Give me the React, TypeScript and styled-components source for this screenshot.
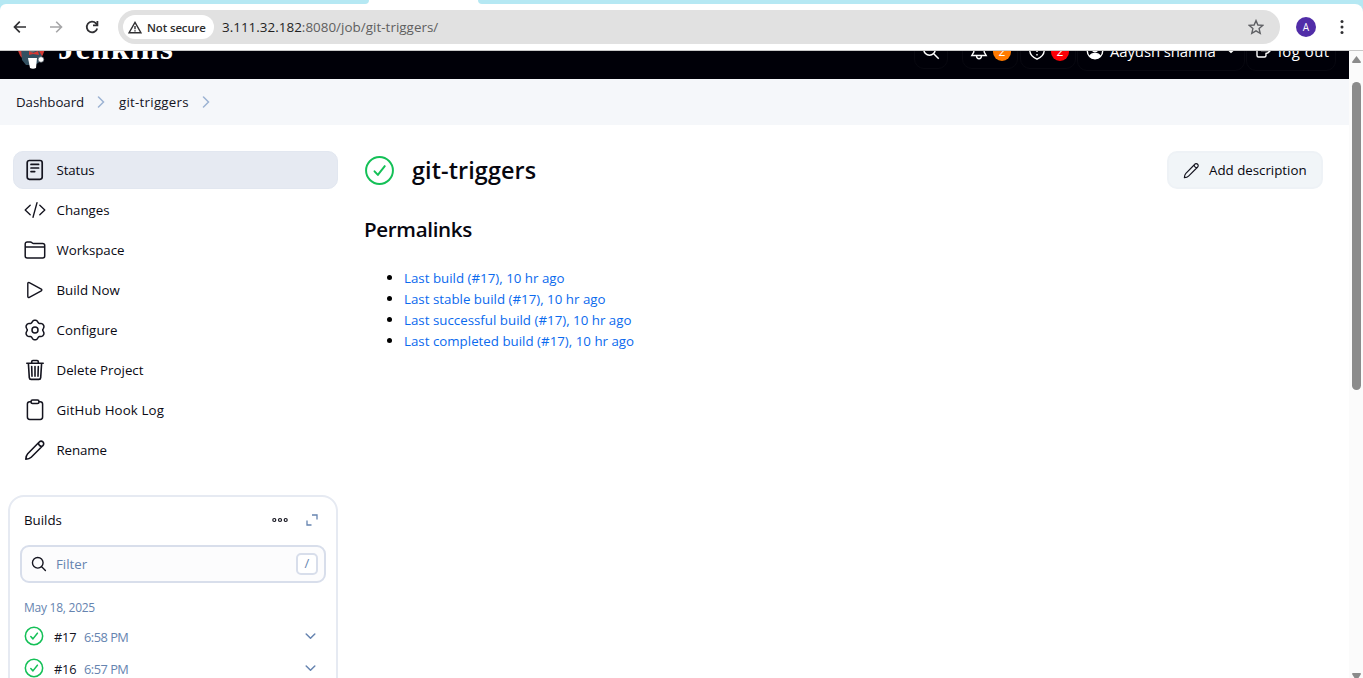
import React from 'react';
import styled, { createGlobalStyle } from 'styled-components';

const GlobalStyle = createGlobalStyle`
  * { box-sizing: border-box; }
  body { margin: 0; background: #fff; overflow: hidden; font-family: "Open Sans", "Noto Sans", sans-serif; font-size: 13.3px; color: #14141f; }
  svg { display: block; flex: none; }
`;

const Label = styled.span<{ $ls?: number }>`
  white-space: nowrap;
  letter-spacing: ${p => p.$ls ?? 0}px;
`;

/* Browser chrome */
const Window = styled.div`
  width: 1363px; height: 678px; display: flex; flex-direction: column; overflow: hidden; background: #fff;
`;
const TabStrip = styled.div`
  height: 4px; flex: none; display: flex; justify-content: space-between; background: #fff;
`;
const StripPart = styled.div<{ $w: number; $left?: boolean }>`
  width: ${p => p.$w}px; background: #b5e8f3;
  border-radius: ${p => (p.$left ? '0 0 8px 0' : '0 0 0 8px')};
`;
const ToolbarBack = styled.div`
  height: 47px; flex: none; background: #b5e8f3;
`;
const Toolbar = styled.div`
  height: 47px; display: flex; align-items: center; background: #fff; border-bottom: 1px solid #c8c8c8;
  border-radius: 6px 8px 0 0; padding: 0 13px 0 12px;
`;
const NavButtons = styled.div`
  display: flex; gap: 20px; width: 106px; flex: none;
`;
const AddressBar = styled.div`
  width: 1162px; height: 34px; border-radius: 17px; background: #e1e1e1; display: flex; align-items: center;
  padding: 0 16px 0 5px;
`;
const SecurityChip = styled.div`
  width: 91px; height: 24px; border-radius: 12px; background: #fff; display: flex; align-items: center; gap: 5px;
  padding-left: 5px; font-size: 11.4px; font-weight: 600; color: #2c2c2c; letter-spacing: -0.1px;
`;
const ChipText = styled.span` white-space: nowrap; `;
const Url = styled.div`
  flex: 1; margin-left: 8px; font-size: 13.4px; color: #5f5f5f; white-space: nowrap; letter-spacing: 0.03px;
`;
const Host = styled.span` color: #1f1f1f; `;
const Avatar = styled.div`
  width: 20px; height: 20px; margin: 0 auto 0 16px; border-radius: 50%; background: #512da8; color: #fff;
  font-size: 10px; display: flex; align-items: center; justify-content: center;
`;

/* Page */
const Viewport = styled.div` flex: 1; min-height: 0; display: flex; `;
const Page = styled.div` width: 1349px; flex: none; overflow: hidden; `;
const ScrollTrack = styled.div`
  width: 14px; background: #fbfbfb; display: flex; flex-direction: column; align-items: center; padding: 5px 0 0 1px;
`;
const ScrollThumb = styled.div`
  width: 9px; height: 308px; margin: 19px 0 auto; border-radius: 5px; background: #8b8b8b;
`;
const HeaderClip = styled.div`
  height: 28px; overflow: hidden; display: flex; align-items: flex-end; background: #000008;
`;
const Header = styled.header`
  height: 56px; flex: 1; display: flex; align-items: center; color: #fff; padding: 0 13px 0 17px;
`;
const Brand = styled.div`
  font-family: "Liberation Serif", serif; font-weight: 700; font-size: 33px; line-height: 36px;
  margin: 0 auto 6px 12px; letter-spacing: 1.1px;
`;
const HeaderButton = styled.div<{ $w: number; $h: number; $gap?: number; $pad?: number; $ml?: number }>`
  width: ${p => p.$w}px; height: ${p => p.$h}px; margin-left: ${p => p.$ml ?? 0}px;
  padding-left: ${p => p.$pad ?? 8}px; gap: ${p => p.$gap ?? 6}px;
  border: 1px solid #080810; border-radius: 10px; display: flex; align-items: center; font-size: 14.9px;
`;
const Badge = styled.span<{ $c: string }>`
  width: 18px; height: 18px; margin: 1px 0 0 -1px; border-radius: 9px; background: ${p => p.$c}; font-size: 12px; line-height: 17px; text-align: center;
`;
const Breadcrumbs = styled.nav`
  height: 46px; background: #f5f7fa; display: flex; align-items: center; padding-left: 16px;
`;
const Crumb = styled(Label)<{ $w: number }>` width: ${p => p.$w}px; `;
const Divider = styled.svg` margin: 0 14px 0 13px; `;
const Body = styled.div` display: flex; `;
const Side = styled.aside` width: 338px; flex: none; padding: 26px 0 0 8px; `;
const Task = styled.div<{ $active?: boolean }>`
  height: 38px; margin: 0 0 2px 5px; padding-left: 10px; display: flex; align-items: center; gap: 10.5px;
  border-radius: 10px; background: ${p => (p.$active ? '#e6eaf2' : 'transparent')};
  border: 1px solid ${p => (p.$active ? '#e2e7f0' : 'transparent')};
  color: #0a0a14;
`;
const BuildsCard = styled.section`
  margin-top: 26px; width: 330px; height: 260px; border: 2px solid #e6eaf2; border-radius: 16px; padding: 0 10px;
`;
const BuildsHeader = styled.div`
  height: 48px; display: flex; align-items: center; padding: 0 8px 2px 4px; gap: 18px; color: #0a0a14;
`;
const BuildsTitle = styled(Label)` margin-right: auto; `;
const Filter = styled.div`
  height: 38px; border: 2px solid #d8deeb; border-radius: 9px; background: #fcfcfd; display: flex; align-items: center;
  padding: 0 6px 0 9px; gap: 9px; color: #6684b0;
`;
const Key = styled.div`
  width: 22px; height: 22px; border: 2px solid #d8deeb; border-radius: 5px; margin-left: auto; background: #fff;
  text-align: center; font-size: 13px; line-height: 17px;
`;
const DateLabel = styled.div`
  margin: 15px 4px 4px; font-size: 12px; line-height: 20px; height: 18px; color: #6684b0; letter-spacing: -0.25px;
`;
const Build = styled.div`
  height: 32px; display: flex; align-items: center; padding: 0 10px 0 4px;
`;
const BuildNumber = styled(Label)` width: 30px; margin-left: 10px; font-size: 12.8px; padding-top: 2px; `;
const BuildTime = styled(Label)` flex: 1; font-size: 12.8px; color: #6684b0; padding-top: 2px; `;

const Main = styled.main` flex: 1; padding: 26px 26px 0 26px; color: #07070f; `;
const TitleRow = styled.div` display: flex; align-items: center; height: 38px; `;
const Title = styled.h1`
  margin: 0 auto 0 17px; font-size: 23.4px; font-weight: 600; letter-spacing: 0.1px; line-height: 38px; white-space: nowrap;
`;
const DescriptionButton = styled.div`
  width: 156px; height: 38px; border-radius: 10px; background: #f1f5f8; border: 2px solid #eef2f6; display: flex;
  align-items: center; gap: 9px; padding-left: 14px;
`;
const Heading = styled.h2` margin: 23px 0 21px; font-size: 20.6px; font-weight: 600; line-height: 34px; letter-spacing: -0.35px; `;
const Links = styled.ul` margin: 0; padding: 0; list-style: none; `;
const LinkRow = styled.li`
  display: flex; align-items: center; height: 21px; padding-left: 23px; color: #0b6aee;
  &::before { content: ''; width: 5px; height: 5px; border-radius: 50%; background: #000; margin-right: 12px; }
`;

const Icon = ({ size = 22, w = 1.5, children, color = '#14141f' }: { size?: number; w?: number; color?: string; children: React.ReactNode }) => (
  <svg width={size} height={size} viewBox="0 0 22 22" fill="none" stroke={color} strokeWidth={w} strokeLinecap="round" strokeLinejoin="round">{children}</svg>
);
const Pencil = ({ size = 22, w = 1.4 }: { size?: number; w?: number }) => (
  <Icon size={size} w={w}><path d="M1.800 20.200c.1-2 .5-4 1.900-5.500L15 3.200c1.100-1.300 2.700-1.500 3.900-.3s1 2.800-.2 3.900L7.200 18.200c-1.500 1.500-3.400 1.900-5.400 2zM14.600 3.800c-.4 1.900 1.600 3.900 3.500 3.500" /></Icon>
);
const Down = ({ color = '#6684b0', size = 11 }: { color?: string; size?: number }) => (
  <svg width={size} height="7" viewBox="0 0 11 7" fill="none" stroke={color} strokeWidth="1.5"><path d="M1.2 1l4.3 4.2L9.8 1" strokeLinecap="round" strokeLinejoin="round" /></svg>
);
const Success = ({ size, w }: { size: number; w: number }) => (
  <svg width={size} height={size} viewBox="0 0 30 30" fill="none" stroke="#14c057" strokeWidth={w} strokeLinecap="round" strokeLinejoin="round">
    <circle cx="15" cy="15" r="13" /><path d="M10.200 15.800l3.200 3.500 6.700-8.500" />
  </svg>
);
const Chevron = () => (
  <Divider width="8" height="12" viewBox="0 0 8 12" fill="none" stroke="#9db3d3" strokeWidth="1.5"><path d="M1.5 1l5 5-5 5" strokeLinecap="round" /></Divider>
);

/* Six-lobed gear outline */
const gear = Array.from({ length: 72 }, (_, i) => {
  const a = (i * Math.PI) / 36;
  const r = 8.9 - 1.05 * Math.cos(6 * a) - 0.15 * Math.cos(12 * a);
  return `${(11 + r * Math.cos(a)).toFixed(2)},${(11 + r * Math.sin(a)).toFixed(2)}`;
}).join(' ');

const tasks: { name: string; ls: number; icon: React.ReactNode }[] = [
  { name: 'Status', ls: -0.1, icon: <Icon w={1.7}><rect x="3.2" y="1.500" width="15" height="18.800" rx="2.200" /><path d="M7 5.400h7.600M7 9h7.600M7 12.600h3.700" /></Icon> },
  { name: 'Changes', ls: 0, icon: <Icon w={1.35}><path d="M6.2 6.2L1.2 11l5 4.8M15.8 6.2l5 4.800-5 4.800M13 3.700L9 18.300" /></Icon> },
  { name: 'Workspace', ls: -0.05, icon: <Icon><path d="M1.200 17V5c0-1.300.8-2 2-2h3.200c1.500 0 1.700 1.500 3.200 1.500h9c1.400 0 2.100.7 2.100 2V17c0 1.200-.8 2-2 2H3.200c-1.300 0-2-.8-2-2zM1.200 8h19.500" /></Icon> },
  { name: 'Build Now', ls: 0, icon: <Icon w={1.4}><path d="M3.800 4.400v13.200c0 .8.8 1.200 1.500.8l12-6.600c.7-.4.7-1.200 0-1.600L5.300 3.600c-.7-.4-1.500 0-1.500.8z" /></Icon> },
  { name: 'Configure', ls: 0.05, icon: <Icon><circle cx="11" cy="11" r="3" /><polygon points={gear} /></Icon> },
  { name: 'Delete Project', ls: 0, icon: <Icon w={1.6}><path d="M4.400 4.500l.9 14.100c.1 1.100.7 1.800 1.800 1.800h7.800c1.100 0 1.700-.7 1.800-1.800l.9-14.100M2.800 4.300h16.400M7.700 4.200V2.700c0-.7.5-1.200 1.200-1.200h4.200c.7 0 1.200.5 1.200 1.200v1.500M11 7.500v9.700M7.700 7.500l.3 9.700M14.300 7.500l-.3 9.700" /></Icon> },
  { name: 'GitHub Hook Log', ls: 0.12, icon: <Icon><path d="M7 2.700H5.800c-1.400 0-2.400 1-2.400 2.400v13c0 1.400 1 2.400 2.400 2.400h10.400c1.400 0 2.400-1 2.400-2.400v-13c0-1.400-1-2.400-2.400-2.400H15" /><rect x="7" y="1" width="8" height="3.400" rx="1.500" /></Icon> },
  { name: 'Rename', ls: -0.1, icon: <Pencil w={1.6} /> },
];

const links: string[] = [
  'Last build (#17), 10 hr ago',
  'Last stable build (#17), 10 hr ago',
  'Last successful build (#17), 10 hr ago',
  'Last completed build (#17), 10 hr ago',
];

const Butler = () => (
  <svg width="29" height="38" viewBox="0 0 29 38">
    <circle cx="14" cy="12" r="12" fill="#f0d6b7" />
    <path d="M0 13q1 10 6 14h17q5-5 5-14z" fill="#d33833" />
    <path d="M4 16l7 3h11l3 5-1 5-6 4H9l-4-5z" fill="#335061" />
    <path d="M10 16h10v2l-5 3-5-3z" fill="#6b6a70" />
    <path d="M12 19l4 2 5-2 1 4-6-1-4 1z" fill="#d33833" />
    <path d="M11 26h9l-1 10q-3 1.500-6 0z" fill="#fff" />
    <circle cx="24" cy="27.500" r="2.800" fill="#fff" stroke="#56606a" strokeWidth=".7" />
  </svg>
);

export default function App() {
  return (
    <Window>
      <GlobalStyle />
      <TabStrip><StripPart $w={369} $left /><StripPart $w={885} /></TabStrip>
      <ToolbarBack>
        <Toolbar>
          <NavButtons>
            <svg width="16" height="16" viewBox="0 0 16 16" fill="none" stroke="#303033" strokeWidth="1.7"><path d="M14 8H2.500M7.800 2.700L2.500 8l5.300 5.300" /></svg>
            <svg width="16" height="16" viewBox="0 0 16 16" fill="none" stroke="#a5a5a7" strokeWidth="1.6"><path d="M2 8h11.500M8.200 2.700L13.500 8l-5.300 5.300" /></svg>
            <svg width="16" height="16" viewBox="0 0 16 16" fill="none" stroke="#303033" strokeWidth="1.8"><path d="M13.200 9.400A5.300 5.300 0 1 1 12 4.400l1.300 1.400" /><path d="M13.400 1.900v4.400H9" /></svg>
          </NavButtons>
          <AddressBar>
            <SecurityChip>
              <svg width="14" height="13" viewBox="0 0 14 13" fill="none" stroke="#303033" strokeWidth="1.4"><path d="M7 1.400L12.900 11.700H1.100z" /><path d="M7 5v3.300M7 9.200v1.300" /></svg>
              <ChipText>Not secure</ChipText>
            </SecurityChip>
            <Url><Host>3.111.32.182</Host>:8080/job/git-triggers/</Url>
            <svg width="16" height="16" viewBox="0 0 16 16" fill="none" stroke="#5f6064" strokeWidth="1.4"><path d="M8 1.600l1.900 4.400 4.800.4-3.600 3.200 1.100 4.700L8 11.800l-4.200 2.500 1.100-4.700L1.300 6.400l4.800-.4z" /></svg>
          </AddressBar>
          <Avatar>A</Avatar>
          <svg width="16" height="16" viewBox="0 0 16 16" fill="#303033"><circle cx="8" cy="2.600" r="1.500" /><circle cx="8" cy="8" r="1.500" /><circle cx="8" cy="13.400" r="1.500" /></svg>
        </Toolbar>
      </ToolbarBack>
      <Viewport>
        <Page>
          <HeaderClip>
            <Header>
              <Butler />
              <Brand>Jenkins</Brand>
              <HeaderButton $w={34} $h={36} $pad={7}><svg width="18" height="18" viewBox="0 0 18 18" fill="none" stroke="#fff" strokeWidth="1.500"><circle cx="7.500" cy="7.500" r="5.700" /><path d="M11.700 11.700l5 5" /></svg></HeaderButton>
              <HeaderButton $w={56} $h={36} $ml={14} $pad={7}>
                <svg width="18" height="18" viewBox="0 0 18 18" fill="none" stroke="#fff" strokeWidth="1.400"><path d="M3.800 10V7a5.200 5.200 0 0 1 10.400 0v3l2 3.500H1.800zM6.500 14c.3 3.600 4.700 3.600 5 0" /></svg>
                <Badge $c="#ff7a00">2</Badge>
              </HeaderButton>
              <HeaderButton $w={56} $h={36} $ml={2} $pad={7}>
                <svg width="18" height="18" viewBox="0 0 18 18" fill="none" stroke="#fff" strokeWidth="1.400"><path d="M9 1L1.800 3.500v5c0 4 3.200 6.800 7.200 8.700 4-1.900 7.200-4.700 7.200-8.700v-5zM9 5v5M9 12v1.500" /></svg>
                <Badge $c="#fc0006">2</Badge>
              </HeaderButton>
              <HeaderButton $w={168} $h={40} $ml={1}>
                <svg width="18" height="18" viewBox="0 0 18 18" fill="none" stroke="#fff" strokeWidth="1.400"><circle cx="9" cy="9" r="7.700" /><circle cx="9" cy="7" r="2.700" fill="#fff" /><path d="M4 14c1.500-3.500 8.500-3.500 10 0-2.500 3-7.500 3-10 0z" fill="#fff" /></svg>
                <Label $ls={-0.1}>Aayush sharma</Label>
                <svg width="16" height="7" viewBox="0 0 16 7" fill="none" stroke="#fff" strokeWidth="1.500"><path d="M5.500 1L9 4.300 12.500 1" /></svg>
              </HeaderButton>
              <HeaderButton $w={90} $h={40} $ml={1} $gap={5}>
                <svg width="18" height="18" viewBox="0 0 18 18" fill="none" stroke="#fff" strokeWidth="1.400"><path d="M7 3H3.500C2.500 3 2 3.500 2 4.500v9c0 1 .5 1.500 1.500 1.500h6c1 0 1.500-.5 1.500-1.500V11.500q2-.2 4-2.500M6 8.500h10M12.500 4.500l4 4" /></svg>
                <Label $ls={0.5}>log out</Label>
              </HeaderButton>
            </Header>
          </HeaderClip>
          <Breadcrumbs>
            <Crumb $w={68} $ls={-0.05}>Dashboard</Crumb><Chevron /><Crumb $w={70} $ls={0.25}>git-triggers</Crumb><Chevron />
          </Breadcrumbs>
          <Body>
            <Side>
              {tasks.map((t, i) => <Task key={t.name} $active={i === 0}>{t.icon}<Label $ls={t.ls}>{t.name}</Label></Task>)}
              <BuildsCard>
                <BuildsHeader>
                  <BuildsTitle>Builds</BuildsTitle>
                  <svg width="16" height="6" viewBox="0 0 16 6" fill="none" stroke="#14141f" strokeWidth="1.200"><circle cx="2.300" cy="3" r="1.500" /><circle cx="8" cy="3" r="1.500" /><circle cx="13.700" cy="3" r="1.500" /></svg>
                  <svg width="12" height="12" viewBox="0 0 12 12" fill="none" stroke="#6684b0" strokeWidth="1.300"><path d="M6 1h5v4.500M1 6.500v4.500h4.500" /></svg>
                </BuildsHeader>
                <Filter>
                  <Icon size={16} w={1.900}><circle cx="9.300" cy="9.300" r="7.300" /><path d="M15 15l4.800 4.800" /></Icon>
                  <Label>Filter</Label><Key>/</Key>
                </Filter>
                <DateLabel>May 18, 2025</DateLabel>
                {[['#17', '6:58 PM'], ['#16', '6:57 PM']].map(([n, t]) => (
                  <Build key={n}><Success size={20} w={2.300} /><BuildNumber $ls={-0.2}>{n}</BuildNumber><BuildTime $ls={-0.5}>{t}</BuildTime><Down /></Build>
                ))}
              </BuildsCard>
            </Side>
            <Main>
              <TitleRow>
                <Success size={31} w={1.900} />
                <Title>git-triggers</Title>
                <DescriptionButton><Pencil size={17} w={1.500} /><Label>Add description</Label></DescriptionButton>
              </TitleRow>
              <Heading>Permalinks</Heading>
              <Links>{links.map(text => <LinkRow key={text}><Label $ls={0.01}>{text}</Label></LinkRow>)}</Links>
            </Main>
          </Body>
        </Page>
        <ScrollTrack>
          <svg width="9" height="7" viewBox="0 0 9 7" fill="#8b8b8b"><path d="M4.500 0L9 6q0 1-1 1H1q-1 0-1-1z" /></svg>
          <ScrollThumb />
          <svg width="9" height="5" viewBox="0 0 9 5" fill="#8b8b8b"><path d="M0 1q0-1 1-1h7q1 0 1 1L6.500 5h-4z" /></svg>
        </ScrollTrack>
      </Viewport>
    </Window>
  );
}
